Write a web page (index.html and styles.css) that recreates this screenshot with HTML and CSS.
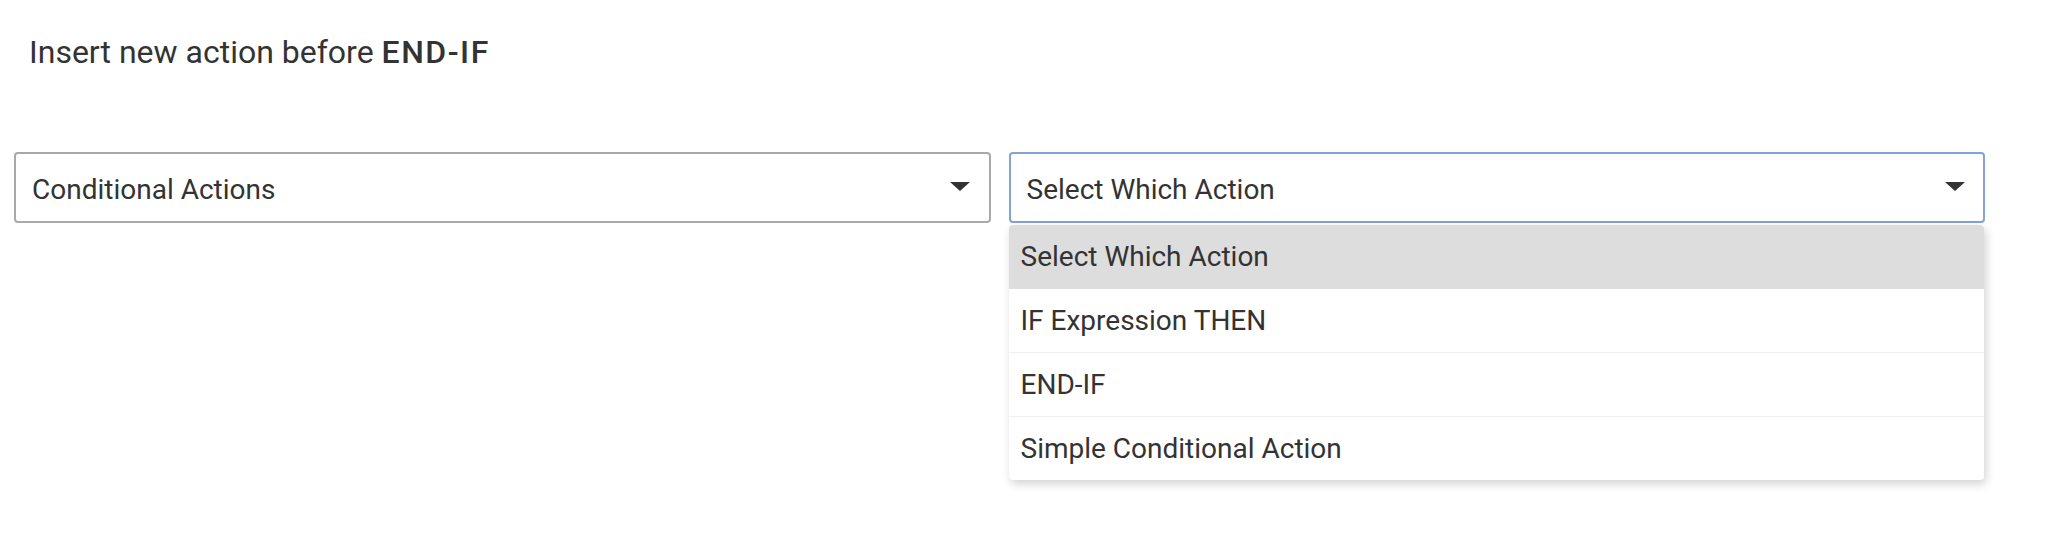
FILE: index.html
```html
<!DOCTYPE html>
<html lang="en">
<head>
<meta charset="utf-8">
<title>Insert action</title>
<link rel="stylesheet" href="styles.css">
</head>
<body>
<div class="page">
  <h2 class="title">Insert new action before <strong>END-IF</strong></h2>
  <div class="row">
    <div class="field">
      <div class="select">
        <span class="value">Conditional Actions</span>
        <span class="caret"></span>
      </div>
    </div>
    <div class="field">
      <div class="select focused">
        <span class="value">Select Which Action</span>
        <span class="caret"></span>
      </div>
      <div class="menu">
        <div class="item active">Select Which Action</div>
        <div class="item">IF Expression THEN</div>
        <div class="item">END-IF</div>
        <div class="item">Simple Conditional Action</div>
      </div>
    </div>
  </div>
</div>
</body>
</html>
```
FILE: styles.css
```css
html, body {
  margin: 0;
  padding: 0;
  background: #ffffff;
}

body {
  font-family: Roboto, "Liberation Sans", Arial, sans-serif;
  color: #333333;
}

.page {
  padding: 0 85px 66px 14px;
}

.title {
  margin: 34px 0 0 15px;
  font-size: 32px;
  font-weight: 400;
  line-height: 37.5px;
  color: #333333;
}

.title strong {
  font-weight: 500;
  letter-spacing: 1.5px;
}

.row {
  margin-top: 80px;
  display: flex;
  align-items: flex-start;
  gap: 18px;
}

.field {
  flex: 1 1 0;
  min-width: 0;
}

.select {
  box-sizing: border-box;
  height: 71px;
  border: 2px solid #a9a9a9;
  border-radius: 4px;
  display: flex;
  align-items: center;
  justify-content: space-between;
  padding: 4px 19px 0 16px;
  font-size: 28px;
  color: #333333;
  background: #ffffff;
}

.select.focused {
  border-color: #82a2d8;
  padding-right: 18px;
}

.caret {
  width: 0;
  height: 0;
  border-left: 10px solid transparent;
  border-right: 10px solid transparent;
  border-top: 9px solid #333333;
  margin-top: -5px;
}

.menu {
  margin: 2px 1px 0 0;
  background: #ffffff;
  border-radius: 4px;
  overflow: hidden;
  box-shadow: 2px 4px 10px rgba(0, 0, 0, 0.18);
}

.item {
  box-sizing: border-box;
  height: 64px;
  display: flex;
  align-items: center;
  padding: 1px 0 0 12px;
  font-size: 28px;
  color: #333333;
  border-bottom: 1px solid #f0f0f0;
}

.item:last-child {
  border-bottom: none;
  height: 63px;
}

.item.active {
  background: #dddddd;
  border-bottom-color: #dddddd;
}
```
